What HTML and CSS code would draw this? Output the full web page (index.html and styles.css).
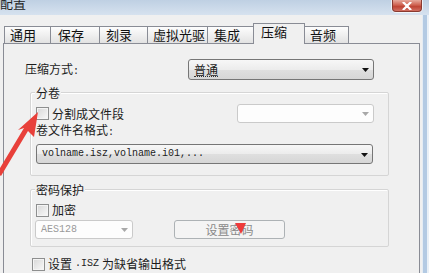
FILE: index.html
```html
<!DOCTYPE html>
<html lang="zh-CN">
<head>
<meta charset="utf-8">
<title>配置</title>
<link rel="stylesheet" href="styles.css">
</head>
<body>
<div class="window">
  <div class="titlebar">
    <span class="title">配置</span>
    <span class="close">
      <svg width="10" height="8" viewBox="0 0 10 8"><path d="M1.5 0.5 L8.5 7.5 M8.5 0.5 L1.5 7.5" stroke="#fff" stroke-width="2.2" stroke-linecap="round"/></svg>
    </span>
  </div>
  <div class="client">
    <div class="main">
      <div class="tabs">
        <div class="tab w1">通用</div>
        <div class="tab w2">保存</div>
        <div class="tab w3">刻录</div>
        <div class="tab w4">虚拟光驱</div>
        <div class="tab w5">集成</div>
        <div class="tab active w6">压缩</div>
        <div class="tab w7">音频</div>
      </div>
      <div class="panel">
        <div class="method">
          <span class="method-label">压缩方式<span class="mono">:</span></span>
          <div class="combo method-combo"><span class="focus">普通</span><svg class="caret" width="7" height="4" viewBox="0 0 7 4"><path d="M0 0H7L3.5 4Z" fill="#111"/></svg></div>
        </div>

        <div class="group split">
          <span class="legend">分卷</span>
          <div class="split-row">
            <label class="check"><span class="box"></span>分割成文件段</label>
            <div class="combo disabled seg-combo"><span></span><svg class="caret" width="7" height="4" viewBox="0 0 7 4"><path d="M0 0H7L3.5 4Z" fill="#a8a8a8"/></svg></div>
          </div>
          <div class="field-label">卷文件名格式<span class="mono">:</span></div>
          <div class="combo name-combo"><span class="mono">volname.isz,volname.i01,...</span><svg class="caret" width="7" height="4" viewBox="0 0 7 4"><path d="M0 0H7L3.5 4Z" fill="#111"/></svg></div>
        </div>

        <div class="group pwd">
          <span class="legend">密码保护</span>
          <label class="check enc"><span class="box"></span>加密</label>
          <div class="pwd-row">
            <div class="combo disabled aes-combo"><span class="mono">AES128</span><svg class="caret" width="7" height="4" viewBox="0 0 7 4"><path d="M0 0H7L3.5 4Z" fill="#a8a8a8"/></svg></div>
            <div class="button disabled">设置密码</div>
          </div>
        </div>

        <label class="check default"><span class="box"></span>设置<span class="mono"> .ISZ </span>为缺省输出格式</label>
      </div>
    </div>
    <div class="frame"></div>
  </div>

  <svg class="annot" width="429" height="273" viewBox="0 0 429 273">
    <path d="M38 112 L34 137 L28 131 L1 176 L-3 173 L24 128 L18 130 Z" fill="#e8403a"/>
    <path d="M235 223 L246 223 L241 234 Z" fill="#ee3b3b"/>
  </svg>
</div>
</body>
</html>
```

FILE: styles.css
```css
* {
  box-sizing: border-box;
  margin: 0;
  padding: 0;
}

body {
  margin: 0;
  background: #f0f0f0;
  font-family: "Noto Sans CJK SC", "Noto Sans", sans-serif;
  font-size: 12px;
  color: #1c1c1c;
}

.window {
  position: relative;
  width: 429px;
  height: 273px;
  overflow: hidden;
  display: flex;
  flex-direction: column;
  background: #f0f0f0;
}

.titlebar {
  height: 15px;
  flex: none;
  display: flex;
  justify-content: space-between;
  align-items: flex-start;
  background: linear-gradient(#bfd0e3, #d6e2ef);
}

.title {
  font-size: 13px;
  line-height: 13px;
  margin-top: -4px;
  color: #222;
}

.close {
  width: 30px;
  height: 12px;
  margin-right: 7px;
  border: 1px solid #8a3a30;
  border-top: none;
  border-radius: 0 0 4px 4px;
  background: linear-gradient(#e6a99c, #cf6352 45%, #bf4535 60%, #d27063);
  box-shadow: 0 0 0 1px rgba(255, 255, 255, 0.7);
  display: flex;
  justify-content: center;
  align-items: center;
}

.client {
  flex: 1;
  display: flex;
  min-height: 0;
}

.main {
  width: 422px;
  flex: none;
  padding-top: 8px;
  display: flex;
  flex-direction: column;
}

.frame {
  flex: 1;
  border-left: 1px solid #e4ecf4;
  background: linear-gradient(90deg, #b3cae3 0 4px, #e9f0f7 4px);
}

/* tabs */
.tabs {
  display: flex;
  align-items: flex-end;
  height: 20px;
  margin-left: 4px;
  position: relative;
  z-index: 1;
}

.tab {
  height: 17px;
  border: 1px solid #898c95;
  border-bottom: none;
  margin-left: -1px;
  background: linear-gradient(#fdfdfd, #e2e2e2);
  font-size: 13px;
  line-height: 16px;
  padding-left: 6px;
  white-space: nowrap;
  color: #111;
}

.tab:first-child {
  margin-left: 0;
}

.tab.active {
  height: 21px;
  margin-bottom: -1px;
  background: #f0f0f0;
  line-height: 15px;
  padding-left: 7px;
}

.w1 { width: 47px; padding-left: 5px; }
.w2 { width: 50px; padding-left: 7px; }
.w3 { width: 49px; }
.w4 { width: 61px; padding-left: 5px; }
.w5 { width: 47px; }
.w6 { width: 52px; }
.w7 { width: 45px; padding-left: 5px; }

.panel {
  flex: 1;
  margin-left: 3px;
  width: 417px;
  border: 1px solid #898c95;
  border-bottom: none;
  background: #f0f0f0;
}

.mono {
  font-family: "Liberation Mono", "DejaVu Sans Mono", monospace;
  font-size: 10px;
  line-height: 10px;
}

/* compression method */
.method {
  display: flex;
  align-items: center;
  margin-top: 15px;
  padding-left: 21px;
}

.method-label {
  width: 163px;
  line-height: 14px;
}

/* combo boxes */
.combo {
  display: flex;
  align-items: center;
  justify-content: space-between;
  border: 1px solid #767676;
  border-radius: 3px;
  background: linear-gradient(#f7f7f7, #ececec 50%, #dfdfdf 52%, #d6d6d6);
  padding: 0 4px 0 5px;
  line-height: 14px;
}

.combo.disabled {
  background: #fdfdfd;
  border-color: #cacaca;
  color: #9a9a9a;
}

.caret {
  flex: none;
  margin-top: 1px;
}

.method-combo {
  width: 186px;
  height: 21px;
}

.focus {
  border-bottom: 1px dotted #333;
  line-height: 13px;
}

/* group boxes */
.group {
  margin-left: 26px;
  width: 359px;
  border: 1px solid #d5d5d5;
  border-radius: 2px;
  box-shadow: inset 1px 1px 0 #fff;
}

.legend {
  display: table;
  margin-top: -7px;
  margin-left: 4px;
  padding: 0 1px;
  line-height: 14px;
  background: #f0f0f0;
}

.split {
  margin-top: 12px;
  padding-bottom: 11px;
}

.split-row {
  display: flex;
  align-items: center;
  justify-content: space-between;
  margin-top: 4px;
  padding-left: 5px;
  padding-right: 14px;
}

.seg-combo {
  width: 137px;
  height: 19px;
}

.field-label {
  padding-left: 5px;
  line-height: 14px;
}

.name-combo {
  margin-top: 6px;
  margin-left: 5px;
  width: 337px;
  height: 20px;
}

.pwd {
  margin-top: 13px;
  padding-bottom: 7px;
}

.enc {
  margin-top: 6px;
  margin-left: 5px;
}

.pwd-row {
  display: flex;
  align-items: center;
  margin-top: 3px;
  padding-left: 4px;
}

.aes-combo {
  width: 98px;
  height: 19px;
}

.button {
  margin-left: 41px;
  width: 111px;
  height: 19px;
  border: 1px solid #adb2b5;
  border-radius: 3px;
  background: #f4f4f4;
  color: #8a8a8a;
  text-align: center;
  line-height: 17px;
}

/* checkboxes */
.check {
  display: flex;
  align-items: center;
  gap: 3px;
  line-height: 14px;
}

.box {
  width: 13px;
  height: 13px;
  flex: none;
  border: 1px solid #8e8f8f;
  background: linear-gradient(135deg, #d7d7d7, #f9f9f9);
  box-shadow: inset 0 0 0 1px #f4f4f4;
}

.default {
  margin-top: 10px;
  margin-left: 28px;
}

/* annotation overlay */
.annot {
  position: absolute;
  left: 0;
  top: 0;
  pointer-events: none;
}
```
